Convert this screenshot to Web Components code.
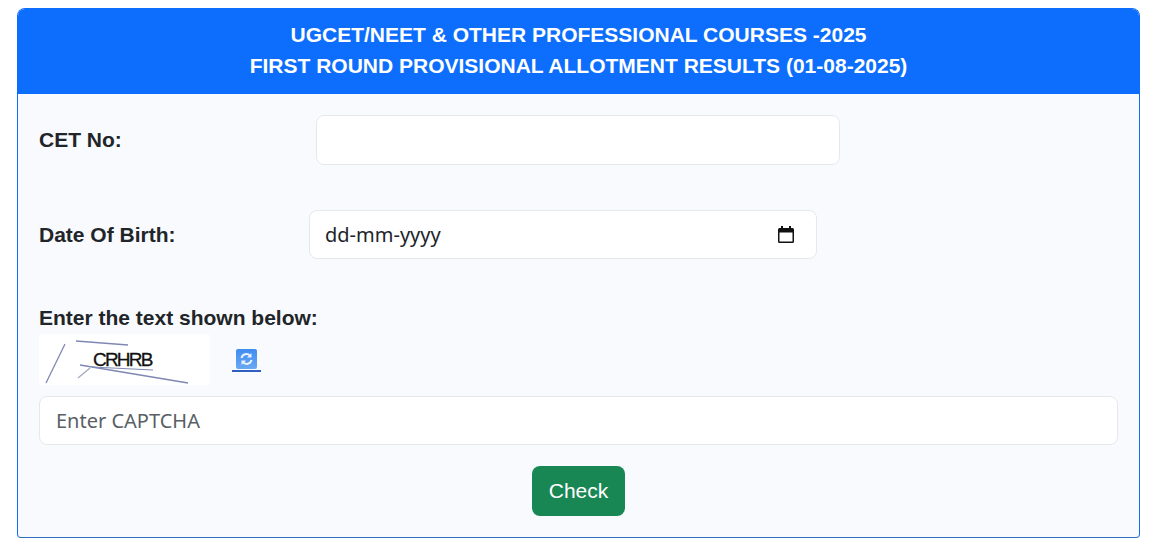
<!DOCTYPE html>
<html lang="en">
<head>
<meta charset="utf-8">
<title>Allotment Results</title>
<style>
  html, body { margin: 0; background: #fff; }
  body { padding: 8px 15px 0 17px; font-family: "Liberation Sans", Arial, sans-serif; }
</style>
</head>
<body>
<result-card>
  <span slot="title">UGCET/NEET &amp; OTHER PROFESSIONAL COURSES -2025</span>
  <span slot="subtitle">FIRST ROUND PROVISIONAL ALLOTMENT RESULTS (01-08-2025)</span>

  <form-row label="CET No:" label-width="277" gap-after="45">
    <text-field width="524" height="50"></text-field>
  </form-row>

  <form-row label="Date Of Birth:" label-width="270" gap-after="46">
    <date-field width="508" height="49">dd-mm-yyyy</date-field>
  </form-row>

  <captcha-block label="Enter the text shown below:" code="CRHRB"></captcha-block>
  <text-field height="49" placeholder="Enter CAPTCHA"></text-field>
  <check-button>Check</check-button>
</result-card>

<script>
class ResultCard extends HTMLElement {
  constructor() {
    super();
    this.attachShadow({ mode: 'open' });
    this.shadowRoot.innerHTML = `
      <style>
        :host {
          display: block;
          box-sizing: border-box;
          height: 530px;
          border: 1px solid #0d6efd;
          border-bottom-color: #2f6fc4;
          border-radius: 8px 8px 4px 4px;
          background: #f8fafd;
          overflow: hidden;
        }
        header {
          height: 85px;
          box-sizing: border-box;
          padding-top: 10px;
          background: #0d6efd;
          color: #fff;
          text-align: center;
          font-size: 21px;
          font-weight: 700;
          line-height: 31px;
        }
        header slot { display: block; }
        main {
          padding: 21px 21px 0;
          display: flex;
          flex-direction: column;
        }
      </style>
      <header>
        <slot name="title"></slot>
        <slot name="subtitle"></slot>
      </header>
      <main><slot></slot></main>
    `;
  }
}

class FormRow extends HTMLElement {
  constructor() {
    super();
    this.attachShadow({ mode: 'open' });
  }

  connectedCallback() {
    const labelWidth = this.getAttribute('label-width') || '270';
    const gapAfter = this.getAttribute('gap-after') || '0';
    this.shadowRoot.innerHTML = `
      <style>
        :host {
          display: flex;
          align-items: center;
          margin-bottom: ${gapAfter}px;
        }
        label {
          width: ${labelWidth}px;
          flex: none;
          font-size: 21px;
          font-weight: 700;
          color: #212529;
        }
      </style>
      <label>${this.getAttribute('label')}</label>
      <slot></slot>
    `;
  }
}

class TextField extends HTMLElement {
  constructor() {
    super();
    this.attachShadow({ mode: 'open' });
  }

  connectedCallback() {
    const width = this.getAttribute('width');
    const height = this.getAttribute('height') || '49';
    this.shadowRoot.innerHTML = `
      <style>
        :host {
          display: block;
          width: ${width ? width + 'px' : 'auto'};
          height: ${height}px;
        }
        input {
          display: block;
          width: 100%;
          height: 100%;
          box-sizing: border-box;
          padding: 0 16px;
          border: 1px solid #e6e8ec;
          border-radius: 8px;
          background: #fff;
          font: 20px "Noto Sans", "Open Sans", sans-serif;
          color: #212529;
          outline: none;
        }
        input::placeholder { color: #595f65; opacity: 1; }
      </style>
      <input type="text" placeholder="${this.getAttribute('placeholder') || ''}">
    `;
  }
}

class DateField extends HTMLElement {
  constructor() {
    super();
    this.attachShadow({ mode: 'open' });
  }

  connectedCallback() {
    this.shadowRoot.innerHTML = `
      <style>
        :host {
          display: flex;
          align-items: center;
          justify-content: space-between;
          box-sizing: border-box;
          width: ${this.getAttribute('width')}px;
          height: ${this.getAttribute('height')}px;
          padding: 0 20px 0 15px;
          border: 1px solid #e6e8ec;
          border-radius: 8px;
          background: #fff;
          font: 20px "Noto Sans", "Open Sans", sans-serif;
          color: #212529;
        }
        svg { display: block; }
      </style>
      <slot></slot>
      <svg width="20" height="20" viewBox="0 0 20 20" aria-hidden="true">
        <path fill="#111" d="M5 1h2v2h6V1h2v2h1.500A1.500 1.500 0 0 1 18 4.500v12a1.500 1.500 0 0 1-1.500 1.500h-13A1.500 1.500 0 0 1 2 16.500v-12A1.500 1.500 0 0 1 3.500 3H5zM3.500 7.500v9h13v-9z"/>
      </svg>
    `;
  }
}

class CaptchaBlock extends HTMLElement {
  constructor() {
    super();
    this.attachShadow({ mode: 'open' });
  }

  connectedCallback() {
    this.shadowRoot.innerHTML = `
      <style>
        :host { display: block; margin-bottom: 11px; }
        .title {
          font-size: 21px;
          font-weight: 700;
          line-height: 25px;
          color: #212529;
          margin-bottom: 4px;
        }
        .line {
          display: flex;
          align-items: center;
          gap: 22px;
        }
        .image {
          position: relative;
          width: 171px;
          height: 51px;
          background: #fff;
          border-radius: 3px;
        }
        .image svg { position: absolute; inset: 0; }
        .code {
          position: absolute;
          left: 54px;
          top: 15px;
          font-size: 19px;
          line-height: 21px;
          letter-spacing: -1.800px;
          color: #111;
          -webkit-text-stroke: 0.3px #111;
        }
        .refresh {
          display: block;
          width: 29px;
          height: 23px;
          margin-top: 1px;
          text-decoration: none;
        }
      </style>
      <div class="title">${this.getAttribute('label')}</div>
      <div class="line">
        <div class="image">
          <span class="code">${this.getAttribute('code')}</span>
          <svg width="171" height="51" viewBox="0 0 171 51" fill="none" stroke="#7f88b5" stroke-width="1.300">
            <path d="M26 10 7 49"/>
            <path d="M37 7 89 11"/>
            <path d="M41 31 149 49"/>
            <path d="M53 33 114 36" stroke-width="1.100"/>
            <path d="M39 44 51 34" stroke="#a4a9c0"/>
          </svg>
        </div>
        <a class="refresh" href="#" aria-label="Refresh">
          <svg width="29" height="23" viewBox="0 0 29 23">
            <defs>
              <linearGradient id="tile" x1="0" y1="0" x2="0" y2="1">
                <stop offset="0" stop-color="#3f8cf0"/>
                <stop offset="1" stop-color="#6aa8f2"/>
              </linearGradient>
            </defs>
            <rect x="4" y="0" width="21" height="20" rx="2" fill="url(#tile)"/>
            <path d="M9.500 9a5 5 0 0 1 8.600-2.200M19.500 11a5 5 0 0 1-8.600 2.200" fill="none" stroke="#e8f2fe" stroke-width="2"/>
            <path d="M19.500 4v4.500H15zM9.500 16v-4.500H14z" fill="#e8f2fe"/>
            <rect x="0" y="21" width="29" height="2" fill="#2f5fc0"/>
          </svg>
        </a>
      </div>
    `;
  }
}

class CheckButton extends HTMLElement {
  constructor() {
    super();
    this.attachShadow({ mode: 'open' });
    this.shadowRoot.innerHTML = `
      <style>
        :host {
          display: flex;
          justify-content: center;
          margin-top: 21px;
        }
        button {
          width: 93px;
          height: 50px;
          padding: 0;
          border: none;
          border-radius: 8px;
          background: #198754;
          color: #fff;
          font: 21px "Liberation Sans", Arial, sans-serif;
        }
      </style>
      <button type="button"><slot></slot></button>
    `;
  }
}

customElements.define('result-card', ResultCard);
customElements.define('form-row', FormRow);
customElements.define('text-field', TextField);
customElements.define('date-field', DateField);
customElements.define('captcha-block', CaptchaBlock);
customElements.define('check-button', CheckButton);
</script>
</body>
</html>
